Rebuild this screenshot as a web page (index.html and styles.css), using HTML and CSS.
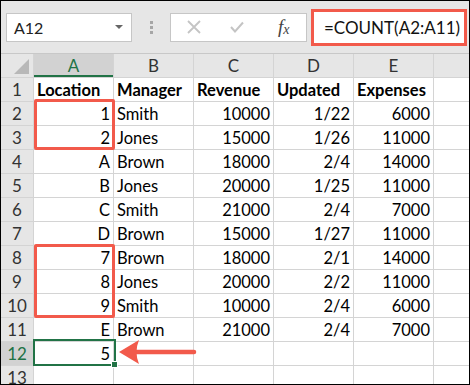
FILE: index.html
```html
<!DOCTYPE html>
<html lang="en">
<head>
    <meta charset="UTF-8">
    <title>COUNT example</title>
    <link rel="stylesheet" href="styles.css">
</head>
<body>
    <div class="frame">
        <div class="toolbar">
            <div class="name-box">
                <span>A12</span>
                <span class="caret"></span>
            </div>
            <div class="grip"><i></i><i></i><i></i></div>
            <div class="fx-box">
                <svg class="tb-icon" width="16" height="14" viewBox="0 0 16 14">
                    <path d="M2 1 L14 13 M14 1 L2 13" stroke="#c4c4c4" stroke-width="1.8" fill="none"/>
                </svg>
                <svg class="tb-icon" width="14" height="12" viewBox="0 0 14 12">
                    <path d="M1 6 L5 10.5 L13 1.5" stroke="#c4c4c4" stroke-width="2" fill="none"/>
                </svg>
                <span class="fx">f<sub>x</sub></span>
            </div>
            <div class="formula">=COUNT(A2:A11)</div>
        </div>

        <div class="sheet">
            <div class="grid">
                <div class="hd corner"><span class="tri"></span></div>
                <div class="hd col active">A</div>
                <div class="hd col">B</div>
                <div class="hd col">C</div>
                <div class="hd col">D</div>
                <div class="hd col">E</div>
                <div class="hd col"></div>

                <div class="hd row">1</div>
                <div class="c b">Location</div><div class="c b">Manager</div><div class="c b">Revenue</div><div class="c b">Updated</div><div class="c b">Expenses</div><div class="c"></div>

                <div class="hd row">2</div>
                <div class="c n">1</div><div class="c">Smith</div><div class="c n">10000</div><div class="c n">1/22</div><div class="c n">6000</div><div class="c"></div>

                <div class="hd row">3</div>
                <div class="c n">2</div><div class="c">Jones</div><div class="c n">15000</div><div class="c n">1/26</div><div class="c n">11000</div><div class="c"></div>

                <div class="hd row">4</div>
                <div class="c n">A</div><div class="c">Brown</div><div class="c n">18000</div><div class="c n">2/4</div><div class="c n">14000</div><div class="c"></div>

                <div class="hd row">5</div>
                <div class="c n">B</div><div class="c">Jones</div><div class="c n">20000</div><div class="c n">1/25</div><div class="c n">11000</div><div class="c"></div>

                <div class="hd row">6</div>
                <div class="c n">C</div><div class="c">Smith</div><div class="c n">21000</div><div class="c n">2/4</div><div class="c n">7000</div><div class="c"></div>

                <div class="hd row">7</div>
                <div class="c n">D</div><div class="c">Brown</div><div class="c n">15000</div><div class="c n">1/27</div><div class="c n">11000</div><div class="c"></div>

                <div class="hd row">8</div>
                <div class="c n">7</div><div class="c">Brown</div><div class="c n">18000</div><div class="c n">2/1</div><div class="c n">14000</div><div class="c"></div>

                <div class="hd row">9</div>
                <div class="c n">8</div><div class="c">Jones</div><div class="c n">20000</div><div class="c n">2/2</div><div class="c n">11000</div><div class="c"></div>

                <div class="hd row">10</div>
                <div class="c n">9</div><div class="c">Smith</div><div class="c n">10000</div><div class="c n">2/4</div><div class="c n">6000</div><div class="c"></div>

                <div class="hd row">11</div>
                <div class="c n">E</div><div class="c">Brown</div><div class="c n">21000</div><div class="c n">2/4</div><div class="c n">7000</div><div class="c"></div>

                <div class="hd row active">12</div>
                <div class="c n">5</div><div class="c"></div><div class="c"></div><div class="c"></div><div class="c"></div><div class="c"></div>

                <div class="hd row">13</div>
                <div class="c"></div><div class="c"></div><div class="c"></div><div class="c"></div><div class="c"></div><div class="c"></div>
            </div>

            <div class="mark mark-top"></div>
            <div class="mark mark-bottom"></div>
            <div class="selection"><span class="handle"></span></div>
            <svg class="arrow" width="80" height="30" viewBox="0 0 80 30">
                <path d="M18 15 L76 15" stroke="#f25a4b" stroke-width="4.5" stroke-linecap="round"/>
                <path d="M1 15 L21 3 Q16 15 21 27 Z" fill="#f25a4b"/>
            </svg>
        </div>
    </div>
</body>
</html>
```

FILE: styles.css
```css
body {
    margin: 0;
    background: #fff;
    font-family: "Lato", "Open Sans", sans-serif;
}

.frame {
    width: 470px;
    height: 385px;
    border: 1px solid #000;
    box-sizing: border-box;
    overflow: hidden;
    background: #fff;
}

.toolbar {
    height: 52px;
    background: #e6e6e6;
    display: flex;
    align-items: center;
    padding-left: 5px;
    box-sizing: border-box;
}

.name-box {
    width: 126px;
    height: 29px;
    background: #fff;
    border: 1px solid #c6c6c6;
    box-sizing: border-box;
    display: flex;
    align-items: center;
    justify-content: space-between;
    padding: 0 8px 0 7px;
    font-size: 16px;
    color: #222;
}

.caret {
    width: 0;
    height: 0;
    border-left: 4px solid transparent;
    border-right: 4px solid transparent;
    border-top: 4px solid #666;
}

.grip {
    width: 38px;
    display: flex;
    flex-direction: column;
    align-items: center;
    gap: 2px;
}

.grip i {
    width: 3px;
    height: 3px;
    background: #a6a6a6;
}

.fx-box {
    width: 137px;
    height: 29px;
    background: #fff;
    border: 1px solid #c6c6c6;
    box-sizing: border-box;
    display: flex;
    align-items: center;
    padding-left: 15px;
    gap: 28px;
}

.tb-icon {
    display: block;
}

.fx {
    font-family: "Liberation Serif", serif;
    font-style: italic;
    font-size: 19px;
    color: #444;
    margin-left: 6px;
}

.fx sub {
    font-size: 14px;
    vertical-align: -1px;
}

.formula {
    margin-left: 4px;
    width: 156px;
    height: 37px;
    border: 3.5px solid #f25a4b;
    box-sizing: border-box;
    background: #fff;
    display: flex;
    align-items: center;
    padding-left: 10px;
    font-size: 17px;
    color: #111;
}

.sheet {
    position: relative;
}

.grid {
    display: grid;
    grid-template-columns: 32px 79px 79px 79px 79px 79px 1fr;
    grid-auto-rows: 23px;
    gap: 1px;
    background: #d4d4d4;
    border-top: 1px solid #c8c8c8;
}

.hd {
    background: #e6e6e6;
    color: #333;
    font-size: 17px;
    display: flex;
    align-items: center;
    justify-content: center;
}

.hd.col.active {
    background: #d2d2d2;
    color: #217346;
    box-shadow: inset 0 -2px 0 #217346;
}

.hd.row.active {
    background: #d2d2d2;
    color: #217346;
}

.corner {
    position: relative;
}

.tri {
    position: absolute;
    right: 4px;
    bottom: 3px;
    width: 0;
    height: 0;
    border-left: 15px solid transparent;
    border-bottom: 15px solid #b8b8b8;
}

.c {
    background: #fff;
    font-size: 16.5px;
    color: #000;
    display: flex;
    align-items: center;
    padding: 0 3px;
    white-space: nowrap;
    overflow: hidden;
}

.c.n {
    justify-content: flex-end;
}

.c.b {
    font-weight: bold;
}

.mark {
    position: absolute;
    left: 33px;
    width: 81px;
    border: 3px solid #f25a4b;
    border-radius: 2px;
    box-sizing: border-box;
}

.mark-top {
    top: 46px;
    height: 51px;
}

.mark-bottom {
    top: 191px;
    height: 74px;
}

.selection {
    position: absolute;
    left: 32px;
    top: 286px;
    width: 83px;
    height: 27px;
    border: 2px solid #217346;
    box-sizing: border-box;
}

.handle {
    position: absolute;
    right: -4px;
    bottom: -4px;
    width: 5px;
    height: 5px;
    background: #217346;
    border: 1px solid #fff;
}

.arrow {
    position: absolute;
    left: 117px;
    top: 284px;
}
```
